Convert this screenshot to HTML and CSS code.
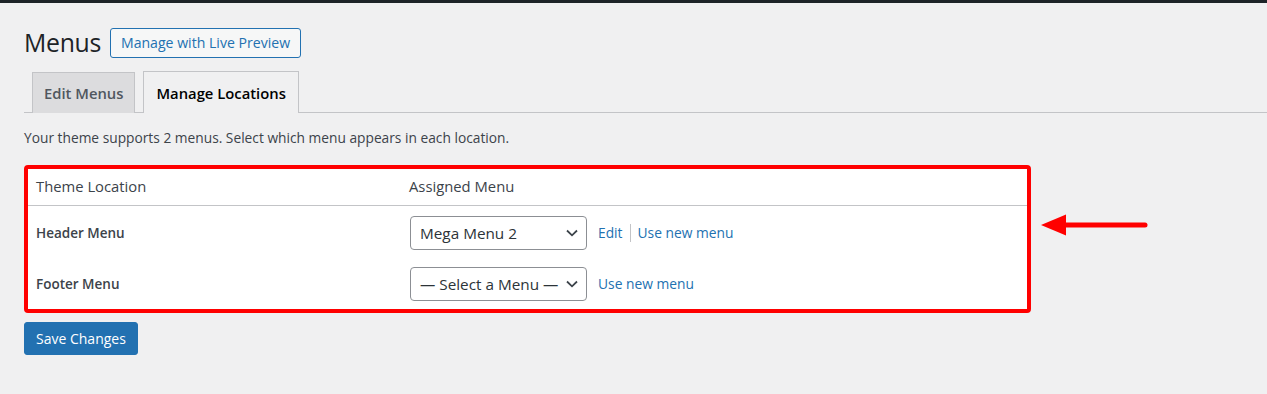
FILE: index.html
```html
<!DOCTYPE html>
<html>
<head>
<meta charset="utf-8">
<link rel="stylesheet" href="styles.css">
</head>
<body>
<div class="topbar"></div>
<div class="wrap">
  <div class="title-row">
    <h1 class="title">Menus</h1>
    <a class="live-btn">Manage with Live Preview</a>
  </div>
  <div class="tabs">
    <a class="tab">Edit Menus</a>
    <a class="tab tab-active">Manage Locations</a>
  </div>
  <p class="intro">Your theme supports 2 menus. Select which menu appears in each location.</p>
  <div class="annot-row">
    <div class="highlight">
      <div class="locs">
        <div class="row head">
          <div class="col-loc">Theme Location</div>
          <div class="col-menu">Assigned Menu</div>
        </div>
        <div class="row body first">
          <div class="col-loc strong">Header Menu</div>
          <div class="col-menu">
            <div class="select"><span>Mega Menu 2</span><svg class="chev" viewBox="0 0 12 8" width="12" height="8"><path d="M1 1.5 L6 6.3 L11 1.5" fill="none" stroke="#3c434a" stroke-width="1.8"/></svg></div>
            <a class="link">Edit</a><span class="sep"></span><a class="link">Use new menu</a>
          </div>
        </div>
        <div class="row body">
          <div class="col-loc strong">Footer Menu</div>
          <div class="col-menu">
            <div class="select"><span>— Select a Menu —</span><svg class="chev" viewBox="0 0 12 8" width="12" height="8"><path d="M1 1.5 L6 6.3 L11 1.5" fill="none" stroke="#3c434a" stroke-width="1.8"/></svg></div>
            <a class="link">Use new menu</a>
          </div>
        </div>
      </div>
    </div>
    <svg class="arrow" viewBox="0 0 108 24" width="108" height="24">
      <path d="M0 12 L25 1.5 L25 22.5 Z" fill="#ff0000"/>
      <line x1="22" y1="12" x2="104" y2="12" stroke="#ff0000" stroke-width="5" stroke-linecap="round"/>
    </svg>
  </div>
  <a class="save">Save Changes</a>
</div>
</body>
</html>
```
FILE: styles.css
```css
* { box-sizing: border-box; }
html, body { margin: 0; padding: 0; }
body {
  background: #f0f0f1;
  font-family: "Open Sans", "Noto Sans", sans-serif;
  font-size: 13px;
  color: #3c434a;
  width: 1267px;
  height: 394px;
  overflow: hidden;
}
.topbar { height: 3px; background: #1d2327; }
.wrap { padding-left: 24px; }
.title-row {
  display: flex;
  align-items: center;
  gap: 9px;
  margin-top: 23px;
  height: 32px;
}
.title {
  margin: 0;
  font-weight: 400;
  font-size: 24.8px;
  color: #1d2327;
  line-height: 32px;
  letter-spacing: -0.3px;
}
.live-btn {
  display: inline-flex;
  align-items: center;
  height: 30px;
  padding: 0 10px;
  border: 1px solid #2271b1;
  border-radius: 3px;
  background: #f6f7f7;
  color: #2271b1;
  font-size: 14.1px;
  font-weight: 500;
  margin-top: 1px;
}
.tabs {
  display: flex;
  gap: 8px;
  margin-top: 14px;
  padding-left: 8px;
  border-bottom: 1px solid #c3c4c7;
  height: 41px;
  align-items: flex-end;
}
.tab {
  display: flex;
  align-items: center;
  height: 41px;
  padding: 0 11px;
  border: 1px solid #c3c4c7;
  border-bottom: none;
  background: #dcdcde;
  color: #50575e;
  font-size: 14.8px;
  font-weight: 600;
  margin-bottom: -1px;
}
.tab-active {
  background: #f0f0f1;
  color: #000;
  height: 42px;
  padding: 0 12px;
}
.intro {
  margin: 16px 0 0;
  line-height: 18px;
  font-size: 13.75px;
}
.annot-row {
  display: flex;
  align-items: flex-start;
  margin-top: 18px;
}
.highlight {
  width: 1007px;
  border: 4px solid #ff0000;
  border-radius: 4px;
  background: #fff;
}
.locs { background: #fff; }
.row { display: flex; align-items: center; }
.row.head {
  height: 37px;
  border-bottom: 1px solid #c3c4c7;
  font-size: 14.8px;
  padding-bottom: 2px;
}
.row.body { height: 51px; }
.row.body.first { margin-top: 1px; }
.col-loc { width: 381px; padding-left: 8px; }
.col-menu { display: flex; align-items: center; }
.strong { font-weight: 600; font-size: 13.5px; color: #3c434a; }
.select {
  width: 177px;
  height: 34px;
  border: 1px solid #8c8f94;
  border-radius: 4px;
  display: flex;
  align-items: center;
  justify-content: space-between;
  padding: 0 8px 0 9px;
  font-size: 15.3px;
  color: #2c3338;
  margin-left: 1px;
  margin-right: 11px;
  background: #fff;
  white-space: nowrap;
}
.chev { flex: none; margin-top: 1px; }
.link { color: #2271b1; font-size: 13.8px; }
.sep {
  display: inline-block;
  width: 1px;
  height: 18px;
  background: #c3c4c7;
  margin: 0 7px 0 7px;
}
.arrow { margin-left: 10px; margin-top: 48px; flex: none; }
.save {
  display: inline-flex;
  align-items: center;
  margin-top: 9px;
  height: 33px;
  padding: 0 11px;
  background: #2271b1;
  border: 1px solid #2271b1;
  border-radius: 3px;
  color: #fff;
  font-size: 14px;
}
```
